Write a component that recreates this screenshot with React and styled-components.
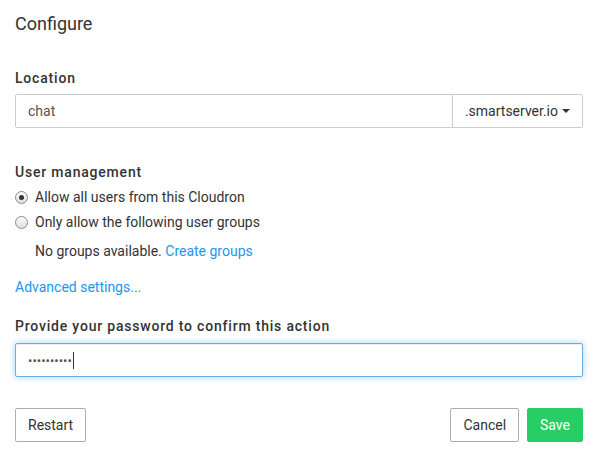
import React from 'react'
import styled, { createGlobalStyle } from 'styled-components'

const GlobalStyle = createGlobalStyle`
  body {
    margin: 0;
    background: #fff;
    font-family: Roboto, "Liberation Sans", sans-serif;
    font-size: 14px;
    color: #333;
  }
  * { box-sizing: border-box; }
`

export default function App() {
    return (
        <Page>
            <GlobalStyle />
            <Title>Configure</Title>

            <Label $top={34}>Location</Label>
            <InputGroup>
                <TextInput defaultValue="chat" />
                <Addon>.smartserver.io <Caret /></Addon>
            </InputGroup>

            <Label $top={34}>User management</Label>
            <RadioRow $top={5}>
                <Radio $checked />
                Allow all users from this Cloudron
            </RadioRow>
            <RadioRow $top={5}>
                <Radio />
                Only allow the following user groups
            </RadioRow>
            <Note>
                No groups available. <Link href="#">Create groups</Link>
            </Note>

            <Advanced><Link href="#">Advanced settings...</Link></Advanced>

            <Label $top={19}>Provide your password to confirm this action</Label>
            <PasswordBox>
                <Dots>••••••••••</Dots>
                <Cursor />
            </PasswordBox>

            <Footer>
                <Btn>Restart</Btn>
                <Actions>
                    <Btn>Cancel</Btn>
                    <Btn $primary>Save</Btn>
                </Actions>
            </Footer>
        </Page>
    )
}

const Page = styled.div`
    padding: 14px 15px 0 15px;
    width: 598px;
`

const Title = styled.h4`
    margin: 0;
    font-size: 18px;
    font-weight: 400;
    line-height: 20px;
    color: #333;
`

const Label = styled.div`
    margin-top: ${({ $top }) => $top}px;
    font-weight: 500;
    line-height: 20px;
    letter-spacing: 0.8px;
    color: #333;
`

const InputGroup = styled.div`
    display: flex;
    margin-top: 6px;
    height: 34px;
`

const TextInput = styled.input`
    flex: 1;
    min-width: 0;
    height: 34px;
    border: 1px solid #ccc;
    border-radius: 2px 0 0 2px;
    padding: 0 12px;
    font: inherit;
    font-size: 14px;
    color: #555;
    outline: none;
`

const Addon = styled.div`
    display: flex;
    align-items: center;
    gap: 4px;
    padding: 0 12px;
    border: 1px solid #ccc;
    border-left: none;
    border-radius: 0 2px 2px 0;
    color: #333;
`

const Caret = styled.span`
    width: 0;
    height: 0;
    border-left: 4px solid transparent;
    border-right: 4px solid transparent;
    border-top: 4px solid #333;
`

const RadioRow = styled.label`
    display: flex;
    align-items: center;
    gap: 7px;
    margin-top: ${({ $top }) => $top}px;
    line-height: 20px;
`

const Radio = styled.span`
    position: relative;
    width: 13px;
    height: 13px;
    border-radius: 50%;
    border: 1px solid #8a8a8a;
    background: linear-gradient(#fdfdfd, #dcdcdc);
    margin-top: 1px;

    &::after {
        content: '';
        display: ${({ $checked }) => ($checked ? 'block' : 'none')};
        position: absolute;
        left: 3px;
        top: 3px;
        width: 5px;
        height: 5px;
        border-radius: 50%;
        background: #333;
    }
`

const Note = styled.div`
    margin-top: 9px;
    padding-left: 20px;
    line-height: 20px;
`

const Link = styled.a`
    color: #2196f3;
    text-decoration: none;
`

const Advanced = styled.div`
    margin-top: 16px;
    line-height: 20px;
`

const PasswordBox = styled.div`
    display: flex;
    align-items: center;
    margin-top: 7px;
    height: 34px;
    padding: 0 12px;
    border: 1px solid #66afe9;
    border-radius: 2px;
    box-shadow: inset 0 1px 1px rgba(0, 0, 0, .075), 0 0 6px rgba(102, 175, 233, .6);
`

const Dots = styled.span`
    font-size: 13px;
    letter-spacing: 0;
    color: #555;
`

const Cursor = styled.span`
    width: 1px;
    height: 17px;
    margin-left: 1px;
    background: #333;
`

const Footer = styled.div`
    display: flex;
    justify-content: space-between;
    margin-top: 31px;
`

const Actions = styled.div`
    display: flex;
    gap: 8px;
`

const Btn = styled.button`
    height: 34px;
    padding: 0 12px;
    font: inherit;
    font-size: 14px;
    border-radius: 2px;
    border: 1px solid ${({ $primary }) => ($primary ? '#27ce65' : '#adadad')};
    background: ${({ $primary }) => ($primary ? '#27ce65' : '#fff')};
    color: ${({ $primary }) => ($primary ? '#fff' : '#333')};
`
